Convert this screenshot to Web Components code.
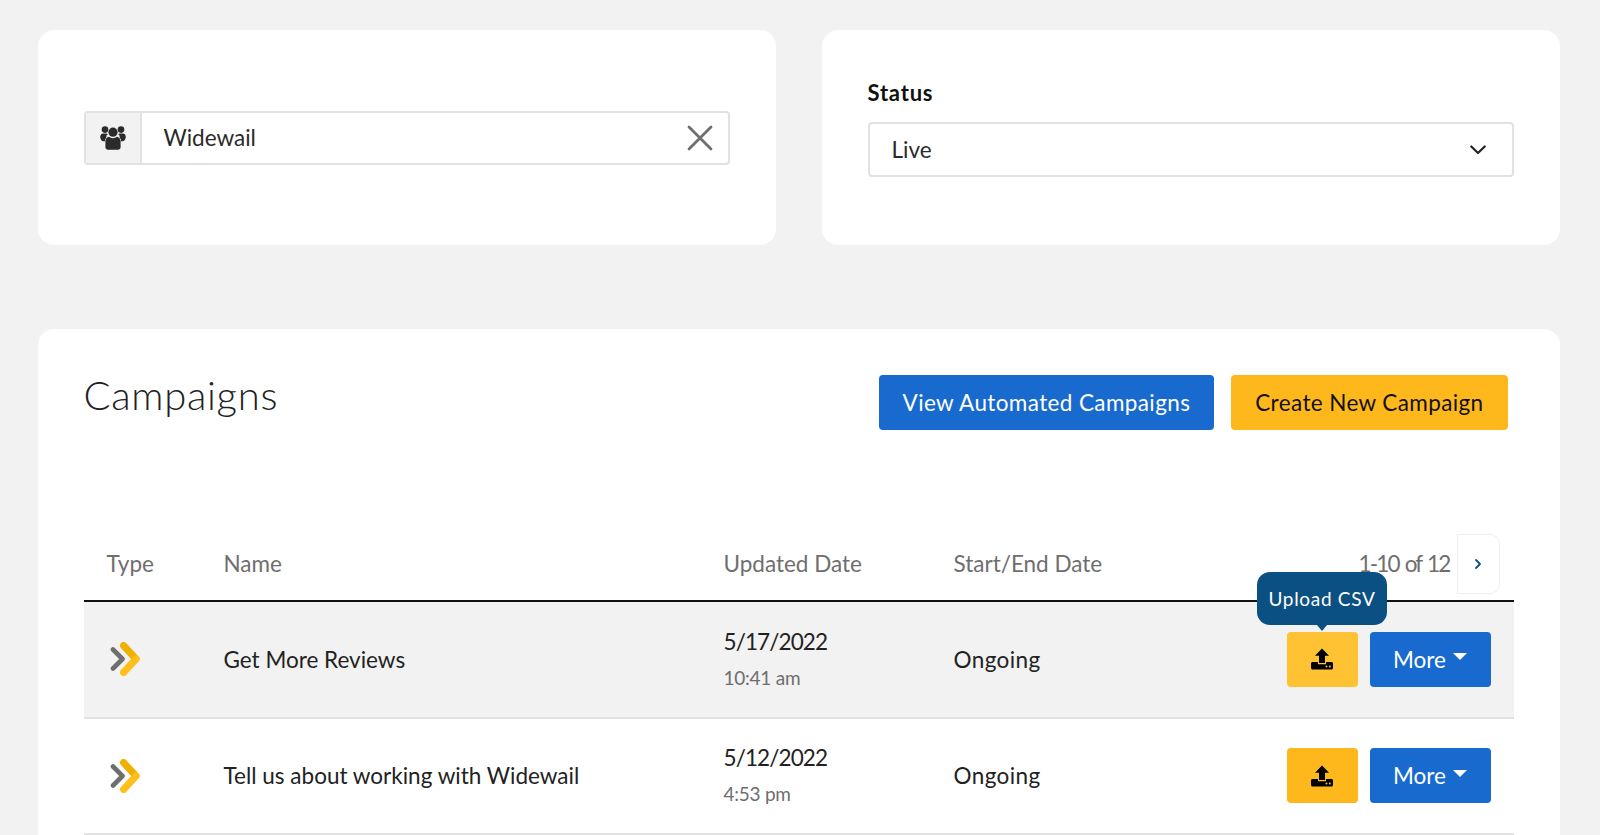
<!DOCTYPE html>
<html lang="en"><head><meta charset="utf-8"><title>Campaigns</title>
<style>
html,body{margin:0;height:835px;overflow:hidden;background:#f2f2f2}
body{font-family:Lato,"Liberation Sans",sans-serif;color:#222;font-size:22.5px}
</style></head><body>
<app-page></app-page>
<script>
const FONT='Lato,"Liberation Sans",sans-serif';
function def(name,css,html){
  customElements.define(name,class extends HTMLElement{
    constructor(){super();this.attachShadow({mode:'open'}).innerHTML='<style>'+css+'</style>'+(typeof html==='function'?html(this):html);}
    connectedCallback(){ if(typeof html==='function'){ this.shadowRoot.innerHTML='<style>'+css+'</style>'+html(this);} }
  });
}
def('ui-card',`:host{display:block;background:#fff;border-radius:16px;box-sizing:border-box;padding:46px}`,`<slot></slot>`);
def('icon-users',`:host{display:block;width:26px;height:24px}svg{display:block}`,
`<svg width="26" height="24" viewBox="0 0 26 24" fill="#2b2b2b"><circle cx="5" cy="3.6" r="3.3"/><circle cx="21" cy="3.6" r="3.3"/><circle cx="13" cy="6.2" r="4.6"/><circle cx="3.4" cy="10.6" r="3"/><circle cx="22.6" cy="10.6" r="3"/><path d="M6.2 7.6c-2.4 0-5.2.6-5.7 3.4-.3 1.800.6 3.800 2.700 4.200l1.800.1V13c0-2 1.200-3.700 2.800-4.500-.5-.5-1-.9-1.600-.9zM19.800 7.600c2.400 0 5.200.6 5.700 3.400.3 1.800-.6 3.800-2.700 4.200l-1.800.1V13c0-2-1.200-3.700-2.800-4.500.5-.5 1-.9 1.600-.9z"/><path d="M9 10.800c1 .9 2.500 1.400 4 1.400s3-.5 4-1.400c2 .4 3.600 2 3.600 4.200v6.200c0 1.500-1.200 2.500-2.600 2.500H8c-1.400 0-2.600-1-2.600-2.500V15c0-2.200 1.600-3.800 3.600-4.200z"/></svg>`);
def('search-group',`:host{display:flex;height:54px;box-sizing:border-box;border:2px solid #e2e2e2;border-radius:4px;align-items:stretch;background:#fff;margin:19px 0}
.add{width:54px;background:#f2f2f2;border-right:2px solid #e2e2e2;display:flex;align-items:center;justify-content:center}
.v{flex:1;display:flex;align-items:center;padding-left:22px;font:22.5px ${FONT};color:#2a2a2a}
.x{width:55px;display:flex;align-items:center;justify-content:center}`,
`<div class="add"><icon-users></icon-users></div><div class="v"><slot></slot></div><div class="x"><svg width="26" height="26" viewBox="0 0 26 26" fill="none" stroke="#6f6f6f" stroke-width="2.8" stroke-linecap="round"><path d="M2 2l22 22M24 2L2 24"/></svg></div>`);
def('select-box',`:host{display:block}
.l{font:700 22px/28px ${FONT};letter-spacing:.8px;color:#111;margin:3px 0 15px}
.b{height:55px;box-sizing:border-box;border:2px solid #e2e2e2;border-radius:4px;display:flex;align-items:center;justify-content:space-between;padding:0 26px 0 22px;font:22.5px ${FONT};color:#2a2a2a}`,
h=>`<div class="l">${h.getAttribute('label')||''}</div><div class="b"><slot></slot><svg width="16" height="10" viewBox="0 0 16 10" fill="none" stroke="#222" stroke-width="2.2" stroke-linecap="round" stroke-linejoin="round"><path d="M1.300 1.500L8 8l6.700-6.500"/></svg></div>`);
def('ui-button',`:host{display:inline-flex;align-items:center;justify-content:center;height:55px;box-sizing:border-box;padding:0 24px;border-radius:4px;font:22.5px ${FONT};letter-spacing:.38px;position:relative;white-space:nowrap;background:#186ace;color:#fff}
:host([kind=yellow]){background:#ffb81c;color:#111}
:host([kind=hover]){background:#ffc233;color:#111}
:host([icon]){width:71px;padding:0}
.caret{width:0;height:0;border:7px solid transparent;border-top:7px solid #fff;border-bottom:0;margin:-5px 0 0 7px}`,
h=>`<slot></slot>${h.hasAttribute('caret')?'<span class="caret"></span>':''}`);
def('icon-upload',`:host{display:block;width:22px;height:22px}svg{display:block}`,
`<svg width="22" height="22" viewBox="0 0 22 22"><path d="M11 .5l7 7.200h-4v7.300H8V7.700H4z" fill="#000"/><path d="M1.500 14H7v2.300h8V14h5.500c.8 0 1.500.7 1.500 1.500V20c0 .8-.7 1.500-1.500 1.500h-19C.7 21.500 0 20.800 0 20v-4.500C0 14.700.7 14 1.500 14z" fill="#000"/><circle cx="15.500" cy="18.400" r="1" fill="#ffc233"/><circle cx="18.800" cy="18.400" r="1" fill="#ffc233"/></svg>`);
def('icon-type',`:host{display:block;width:30px;height:34px}svg{display:block}`,
`<svg width="30" height="34" viewBox="0 0 30 34" fill="none" stroke-linecap="round" stroke-linejoin="round"><path d="M3 7.500l9.500 9.500L3 26.500" stroke="#6f6f6f" stroke-width="4.600"/><path d="M13.500 3.500L26 17" stroke="#f0b000" stroke-width="7"/><path d="M26 17L13.500 30.500" stroke="#ffbf1a" stroke-width="7"/></svg>`);
def('ui-tooltip',`:host{position:absolute;left:50%;bottom:calc(100% + 7px);transform:translateX(-50%);background:#0b5082;color:#fff;border-radius:13px;height:53px;width:130px;display:flex;align-items:center;justify-content:center;font:19px ${FONT};letter-spacing:.7px;white-space:nowrap}
:host::after{content:"";position:absolute;left:50%;top:100%;margin-left:-5px;border:5px solid transparent;border-top:6px solid #0b5082;border-bottom:0}`,`<slot></slot>`);
const grid=`display:grid;grid-template-columns:117px 500px 230px 1fr;align-items:center;padding-left:23px;box-sizing:border-box`;
def('table-head',`:host{${grid};height:68px;align-content:start;border-bottom:2px solid #111;font:22.5px ${FONT};color:#6e6e6e;margin-top:-1px}
span.t{padding-bottom:2px}
.p{display:flex;align-items:center;justify-content:flex-end;padding-right:14px;gap:7px;position:relative}
.n{width:43px;height:60px;box-sizing:border-box;border:1px solid #f0f0f0;border-radius:0 10px 10px 0;display:flex;align-items:center;justify-content:center}
.c{letter-spacing:-1.8px;word-spacing:2px;padding-bottom:2px}`,
`<span class="t">Type</span><span class="t">Name</span><span class="t">Updated Date</span><div style="display:flex;justify-content:space-between;align-items:center"><span class="t">Start/End Date</span><div class="p"><span class="c">1-10 of 12</span><div class="n"><svg width="8" height="12" viewBox="0 0 8 12" fill="none" stroke="#0b5082" stroke-width="1.8" stroke-linecap="round" stroke-linejoin="round"><path d="M2 2l4 4-4 4"/></svg></div></div></div>`);
def('campaign-row',`:host{${grid};height:116.5px;border-bottom:2px solid #e2e2e2;font:22.5px ${FONT};color:#222}
:host([active]){background:#f2f2f2}
.t{padding-left:3px}
.d{display:flex;flex-direction:column;gap:11px;padding-bottom:2px}.d span{letter-spacing:-.9px}.d small{font-size:19px;color:#6e6e6e;letter-spacing:-.25px}
.e{display:flex;justify-content:space-between;align-items:center;padding-right:23px}
.o{letter-spacing:.4px}
.a{display:flex;gap:12px}`,
h=>`<div class="t"><icon-type></icon-type></div><div>${h.getAttribute('name')}</div><div class="d"><span>${h.getAttribute('date')}</span><small>${h.getAttribute('time')}</small></div><div class="e"><div class="o">Ongoing</div><div class="a"><ui-button kind="${h.hasAttribute('active')?'hover':'yellow'}" icon><icon-upload></icon-upload>${h.hasAttribute('active')?'<ui-tooltip>Upload CSV</ui-tooltip>':''}</ui-button><ui-button caret style="width:121px;padding:0;letter-spacing:0">More</ui-button></div></div>`);
def('campaigns-panel',`:host{display:block;margin-top:84px}
.h{display:flex;justify-content:space-between;align-items:flex-start;padding-right:6px;margin-bottom:105px}
h1{margin:-3px 0 0;font:300 40px/46px ${FONT};letter-spacing:.7px;color:#222}
.b{display:flex;gap:17px}`,
`<ui-card><div class="h"><h1>Campaigns</h1><div class="b"><ui-button>View Automated Campaigns</ui-button><ui-button kind="yellow">Create New Campaign</ui-button></div></div><table-head></table-head><campaign-row active name="Get More Reviews" date="5/17/2022" time="10:41 am"></campaign-row><campaign-row name="Tell us about working with Widewail" date="5/12/2022" time="4:53 pm"></campaign-row></ui-card>`);
def('app-page',`:host{display:block;padding:30px 40.5px 0 37.5px}
.top{display:grid;grid-template-columns:1fr 1fr;gap:46px}
.top ui-card{height:215px}`,
`<div class="top"><ui-card style="display:flex;flex-direction:column;justify-content:center"><search-group>Widewail</search-group></ui-card><ui-card><select-box label="Status">Live</select-box></ui-card></div><campaigns-panel></campaigns-panel>`);
</script></body></html>
